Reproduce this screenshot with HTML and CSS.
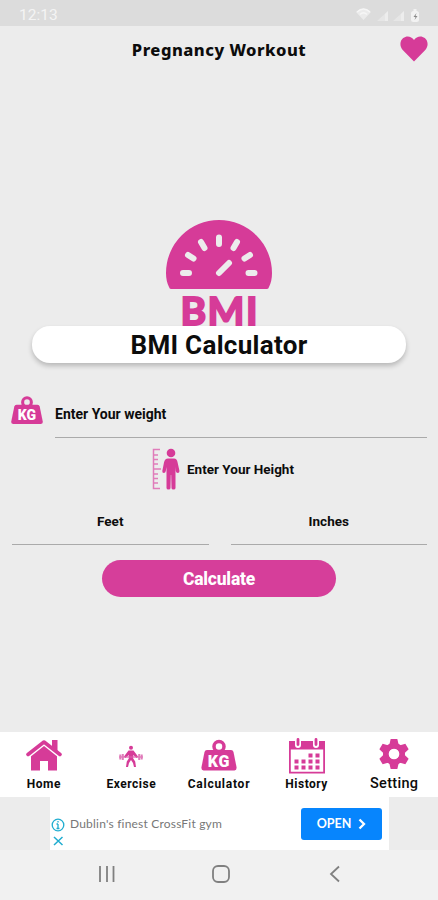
FILE: index.html
```
<!DOCTYPE html>
<html lang="en">

<head>
    <meta charset="UTF-8">
    <meta name="viewport" content="width=device-width, initial-scale=1.0">
    <title>Pregnancy Workout</title>
    <link rel="stylesheet" href="styles.css">
</head>

<body>
    <div class="status-bar">
        <span class="time">12:13</span>
        <svg class="status-icons" width="66" height="16" viewBox="0 0 66 16">
            <path d="M0 5Q7.500-2 15 5L7.500 13Z" opacity=".65" />
            <path d="M1 5Q7.500-1 14 5M4 7.500Q7.500 4 11 7.500" fill="none" stroke="#f6f6f6" stroke-width="1.300" />
            <path d="M21 14L32 4V14ZM37 14L48 4V14Z" opacity=".45" />
            <path d="M29 14V7l3-3v10ZM45 14V7l3-3v10Z" opacity=".6" />
            <rect x="55" y="4" width="8" height="11" rx="2.500" />
            <path d="M57.500 4V2h3v2" />
            <path d="M60.500 6l-3 4h2l-1 3 3-4h-2z" fill="#888" />
        </svg>
    </div>

    <header class="header">
        <h1>Pregnancy Workout</h1>
        <svg class="heart" width="28" height="26" viewBox="0 0 28 26">
            <path d="M14 25.500L3.200 14.600C-1 10 0 4.500 3.200 2C7-.9 11.500.4 14 4C16.500.4 21-.9 24.800 2C28 4.500 29 10 24.800 14.600Z" />
        </svg>
    </header>

    <main class="main">
        <div class="bmi-logo">
            <svg width="106" height="70" viewBox="0 0 106 70">
                <path d="M3 67Q0 61 0 53a53 53 0 0 1 106 0Q106 61 103 67Q102.500 69 101 69H5Q3.500 69 3 67Z" />
                <g stroke="#ececec" stroke-width="6" stroke-linecap="round">
                    <path d="M17 53h6M82.500 53h6M22 35l5.500 3.500M84 35l-5.500 3.500M35 22l3.500 6M71 22l-3.500 6M53 17.500v6.500M53 53l10-10" />
                </g>
            </svg>
            <span class="bmi-text">BMI</span>
        </div>
        <h2 class="title-card">BMI Calculator</h2>

        <div class="weight-row">
            <svg class="weight-icon" width="32" height="28" viewBox="0 0 36 32">
                <circle cx="18" cy="7" r="5" fill="none" stroke="#d63b98" stroke-width="3.500" />
                <path d="M6 10H30Q32 10 32.500 12L36 29Q36.500 32 33.500 32H2.500Q-.5 32 0 29L3.500 12Q4 10 6 10Z" />
                <text x="18" y="27" text-anchor="middle">KG</text>
            </svg>
            <div class="field weight-field">Enter Your weight</div>
        </div>

        <div class="height-row">
            <svg width="28" height="42" viewBox="0 0 28 42">
                <path d="M8 1.500H1.500v39H8M2 7h4M2 11.500h4M2 16h4M2 21h7M2 26h4M2 30.500h4M2 35h4" fill="none" stroke="#e07cba" stroke-width="1.500" />
                <circle cx="19" cy="5" r="4.300" />
                <path d="M16 10.500h6q3 0 3.600 4L27.500 23q0 2-1.700 2t-2-2L23.500 19v21q0 1.500-2 1.500t-2-1.500l-.3-13h-.4L18.500 40q0 1.500-2 1.500T14.500 40V19l-.7 4q-.3 2-2 2t-1.500-2L12 14.500q.8-4 4-4Z" />
            </svg>
            <span>Enter Your Height</span>
        </div>

        <div class="height-fields">
            <div class="field">Feet</div>
            <div class="field">Inches</div>
        </div>

        <button class="calculate-btn">Calculate</button>
    </main>

    <nav class="bottom-nav">
        <a class="nav-item">
            <svg width="36" height="36" viewBox="0 0 36 36">
                <path d="M26 2h5.500v13l-5.500-5Z" />
                <path d="M5 17L18 6l13 11v15.500H22V23H14v9.500H5Z" />
                <path d="M1 19.500L18 6 35 19.500" fill="none" stroke="#fff" stroke-width="3" />
                <path d="M2 16.500L18 4 34 16.500" fill="none" stroke="#d63b98" stroke-width="3.600" stroke-linecap="round" stroke-linejoin="round" />
            </svg>
            <span>Home</span>
        </a>
        <a class="nav-item">
            <svg width="36" height="36" viewBox="0 0 36 36">
                <circle cx="18" cy="9.800" r="2" />
                <path d="M15.500 12.500h5l4.500 6-1.300 1.400-3.500-3v3.600l2 3 .8 5.500h-2l-1-4-2-3-2 3-1 4h-2l.8-5.500 2-3v-3.600l-3.500 3L11 18.500Z" />
                <path d="M6 19h24" fill="none" stroke="#dc62ac" stroke-width="1.200" />
                <path d="M7.300 16.500v5M9.800 16v6M26.200 16v6M28.700 16.500v5" fill="none" stroke="#e07cba" stroke-width="2" />
            </svg>
            <span>Exercise</span>
        </a>
        <a class="nav-item calculator">
            <svg class="weight-icon" width="36" height="36" viewBox="0 0 36 36">
                <circle cx="18" cy="8.500" r="5" fill="none" stroke="#d63b98" stroke-width="3.500" />
                <path d="M6 12H30Q32 12 32.500 14L35.500 29Q36 32.500 33.500 32.500H2.500Q0 32.500 .5 29L3.500 14Q4 12 6 12Z" />
                <text x="18" y="28.500" text-anchor="middle">KG</text>
            </svg>
            <span>Calculator</span>
        </a>
        <a class="nav-item">
            <svg width="38" height="36" viewBox="0 0 38 36">
                <path d="M1 3H37V35.500H1Z" />
                <path d="M2.800 11.500H35.200V33.700H2.800Z" fill="#fff" />
                <path d="M10 2v5M28 2v5" stroke="#fff" stroke-width="6" stroke-linecap="round" />
                <path d="M10 1.500v5M28 1.500v5" stroke="#d63b98" stroke-width="2.800" stroke-linecap="round" />
                <path d="M20.500 15.500h4v4h-4zM27.500 15.500h4v4h-4zM6.500 21.500h4v4h-4zM13.500 21.500h4v4h-4zM20.500 21.500h4v4h-4zM27.500 21.500h4v4h-4zM6.500 27.500h4v4h-4zM13.500 27.500h4v4h-4zM20.500 27.500h4v4h-4zM27.500 27.500h4v4h-4z" />
            </svg>
            <span>History</span>
        </a>
        <a class="nav-item setting">
            <svg width="36" height="36" viewBox="0 0 36 36">
                <g transform="translate(18 16)">
                    <circle r="8" fill="none" stroke="#d63b98" stroke-width="6" />
                    <path id="tooth" d="M-3.300-15h6.600L5-8H-5Z" />
                    <use href="#tooth" transform="rotate(60)" />
                    <use href="#tooth" transform="rotate(120)" />
                    <use href="#tooth" transform="rotate(180)" />
                    <use href="#tooth" transform="rotate(240)" />
                    <use href="#tooth" transform="rotate(300)" />
                    <circle r="5.300" fill="#fff" />
                </g>
            </svg>
            <span>Setting</span>
        </a>
    </nav>

    <div class="ad-strip">
        <div class="ad">
            <svg class="ad-choices" width="14" height="32" viewBox="0 0 14 32" stroke="#20add0">
                <circle cx="7" cy="7" r="5.800" stroke-width="1.300" />
                <path d="M7 6v5M5.500 6H7M5.500 10.500h3M7 3v1.500" stroke-width="1.300" />
                <path d="M3 19l8.500 8M11.500 19L3 27" stroke-width="1.500" />
            </svg>
            <span class="ad-text">Dublin's finest CrossFit gym</span>
            <button class="open-btn">
                OPEN
                <svg width="8" height="12" viewBox="0 0 8 12" stroke="#fff" stroke-width="2.300">
                    <path d="M1.500 1.500L6 6l-4.500 4.500" />
                </svg>
            </button>
        </div>
    </div>

    <div class="system-nav">
        <svg width="18" height="18" viewBox="0 0 18 18">
            <path d="M2 1v16M9 1v16M15.500 1v16" />
        </svg>
        <svg width="18" height="18" viewBox="0 0 18 18">
            <rect x="1" y="1" width="16" height="16" rx="5" />
        </svg>
        <svg width="18" height="18" viewBox="0 0 18 18">
            <path d="M13 1.500L5 9l8 7.500" />
        </svg>
    </div>
</body>

</html>
```
FILE: styles.css
```
* {
    margin: 0;
    padding: 0;
    box-sizing: border-box;
}

body {
    width: 438px;
    height: 900px;
    background-color: #ececec;
    color: #0c0c0c;
    font-family: Roboto, "Liberation Sans", sans-serif;
    font-weight: bold;
    display: flex;
    flex-direction: column;
    overflow: hidden;
}

svg {
    fill: #d63b98;
    display: block;
    flex-shrink: 0;
}

/* Status bar */
.status-bar {
    height: 26px;
    background-color: #dcdcdc;
    display: flex;
    justify-content: space-between;
    align-items: center;
    padding: 3px 16px 0 19px;
}

.time {
    color: #f4f4f4;
    font-size: 15.500px;
    font-weight: normal;
}

.status-icons {
    fill: #f2f2f2;
}

/* Header */
.header {
    height: 46px;
    display: grid;
    grid-template-columns: 38px 1fr 38px;
    align-items: center;
}

.header h1 {
    grid-column: 2;
    font-family: "Noto Sans", sans-serif;
    font-size: 16.500px;
    font-weight: 800;
    letter-spacing: 0.500px;
    text-align: center;
}

.main {
    height: 660px;
    padding-top: 148px;
    display: flex;
    flex-direction: column;
    align-items: center;
}

/* BMI logo */
.bmi-logo {
    height: 106px;
    display: flex;
    flex-direction: column;
    align-items: center;
}

.bmi-text {
    color: #d63b98;
    font-family: Lato, sans-serif;
    font-size: 39px;
    line-height: 40px;
    letter-spacing: 1.500px;
    margin-right: -1.500px;
    -webkit-text-stroke: 2px #d63b98;
    stroke-linejoin: round;
}

.title-card {
    width: 374px;
    height: 37px;
    background-color: #fff;
    border-radius: 18px;
    box-shadow: 0 3px 5px rgba(0, 0, 0, 0.22);
    font-size: 26px;
    line-height: 38px;
    letter-spacing: 0.300px;
    text-align: center;
}

/* Form */
.weight-row {
    width: 100%;
    display: flex;
    padding: 33px 11px 0;
    gap: 12px;
}

.weight-icon text {
    fill: #fff;
    font-size: 16px;
    font-weight: 900;
}

.field {
    flex: 1;
    height: 42px;
    border-bottom: 1px solid #aaa;
    font-size: 13.500px;
    line-height: 36px;
    text-align: center;
}

.weight-field {
    font-size: 14px;
    text-align: left;
}

.height-row {
    display: flex;
    align-items: center;
    gap: 7px;
    margin-top: 10px;
    padding-left: 8px;
    font-size: 13.500px;
}

.height-fields {
    width: 100%;
    display: flex;
    gap: 22px;
    padding: 13px 11px 0 12px;
}

.calculate-btn {
    width: 234px;
    height: 37px;
    margin-top: 15px;
    border: none;
    border-radius: 19px;
    background-color: #d63e9a;
    color: #fff;
    font-family: inherit;
    font-size: 17.500px;
    font-weight: 800;
    letter-spacing: -0.200px;
}

/* Bottom navigation */
.bottom-nav {
    height: 65px;
    background-color: #fff;
    display: grid;
    grid-template-columns: repeat(5, 1fr);
}

.nav-item {
    display: flex;
    flex-direction: column;
    align-items: center;
    padding-top: 6px;
    font-size: 12px;
    line-height: 20px;
    letter-spacing: 0.500px;
}

.calculator {
    letter-spacing: 0.750px;
}

.setting {
    font-size: 14.500px;
    font-weight: 500;
    letter-spacing: 0.300px;
}

/* Ad banner */
.ad-strip {
    height: 53px;
    display: flex;
    padding-left: 50px;
}

.ad {
    width: 339px;
    background-color: #fff;
    display: flex;
    align-items: center;
    padding: 0 7px 0 1px;
}

.ad-choices {
    fill: none;
    margin-top: 20px;
}

.ad-text {
    flex: 1;
    padding-left: 5px;
    color: #777;
    font-family: Lato, sans-serif;
    font-size: 12px;
    font-weight: normal;
    letter-spacing: 0.200px;
    white-space: nowrap;
}

.open-btn {
    width: 81px;
    height: 32px;
    border: none;
    border-radius: 3px;
    background-color: #0785fd;
    color: #fff;
    font-family: Lato, sans-serif;
    font-size: 12.500px;
    font-weight: bold;
    display: flex;
    align-items: center;
    justify-content: center;
    gap: 7px;
}

.open-btn svg {
    fill: none;
}

/* System navigation */
.system-nav {
    height: 50px;
    background-color: #f1f1f1;
    display: flex;
    justify-content: space-between;
    padding: 15px 94px 0 98px;
}

.system-nav svg {
    fill: none;
    stroke: #808080;
    stroke-width: 1.800;
}
```
